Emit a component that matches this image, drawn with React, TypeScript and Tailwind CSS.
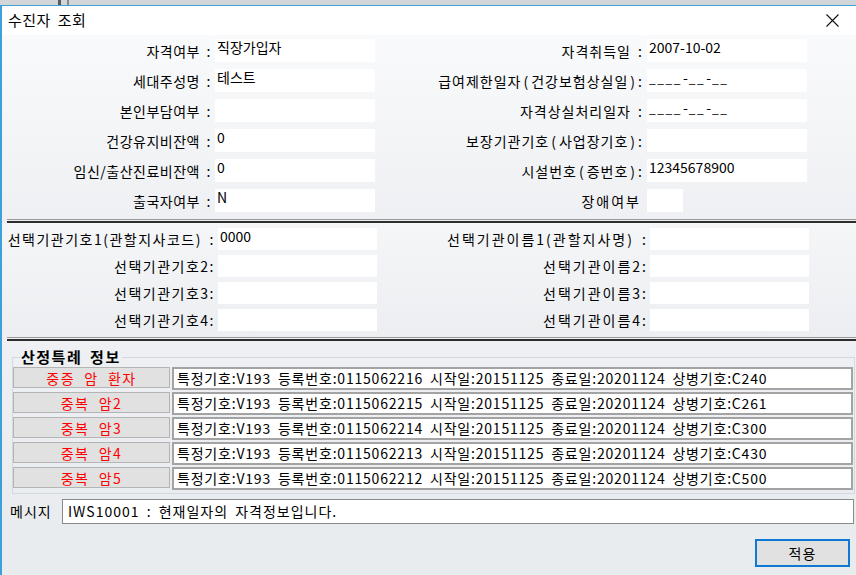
import React from 'react';

const topRows: { l: string; v: string; r: string; rv: string; small?: boolean }[] = [
  { l: '자격여부 :', v: '직장가입자', r: '자격취득일 :', rv: '2007-10-02' },
  { l: '세대주성명 :', v: '테스트', r: '급여제한일자(건강보험상실일) :', rv: '____-__-__' },
  { l: '본인부담여부 :', v: '', r: '자격상실처리일자 :', rv: '____-__-__' },
  { l: '건강유지비잔액 :', v: '0', r: '보장기관기호(사업장기호) :', rv: '' },
  { l: '임신/출산진료비잔액 :', v: '0', r: '시설번호(증번호) :', rv: '12345678900' },
  { l: '출국자여부 :', v: 'N', r: '장애여부', rv: '', small: true },
];

const specials = [
  { name: '중증  암  환자', no: '0115062216', code: 'C240' },
  { name: '중복  암2', no: '0115062215', code: 'C261' },
  { name: '중복  암3', no: '0115062214', code: 'C300' },
  { name: '중복  암4', no: '0115062213', code: 'C430' },
  { name: '중복  암5', no: '0115062212', code: 'C500' },
];

// wide parentheses, like the old Gulim face
function Wide({ text }: { text: string }) {
  const parts = text.split(/([()])/);
  return (
    <>
      {parts.map((p, i) =>
        p === '(' || p === ')' ? (
          <span key={i} className="px-[2px]">{p}</span>
        ) : (
          <React.Fragment key={i}>{p}</React.Fragment>
        )
      )}
    </>
  );
}

// masked date: short separated underscores
function Masked({ text }: { text: string }) {
  return (
    <>
      {text.split('').map((c, i) =>
        c === '_' ? (
          <span key={i} className="text-[12px] tracking-[1.5px]">_</span>
        ) : (
          <span key={i} className="px-[1px]">{c}</span>
        )
      )}
    </>
  );
}

function Separator() {
  return <div className="ml-[5px] h-[4px] border-t border-[#9a9a9a] border-b-2 border-b-[#2e2e2e]" />;
}

function Value({ text, w = 'w-[160px]', h = 'h-[23px]' }: { text: string; w?: string; h?: string }) {
  return (
    <div className={`${w} ${h} bg-white pl-[2px] text-[14px] leading-[16px] whitespace-pre`}>
      {text.includes('_') ? <Masked text={text} /> : text}
    </div>
  );
}

export default function App() {
  return (
    <div className="w-[856px] h-[575px] bg-[#d3d6d9] flex flex-col overflow-hidden text-black [font-family:'Noto_Sans_CJK_KR','Noto_Sans',sans-serif] [word-spacing:3px]">
      <div className="h-[5px] flex">
        <div className="w-[58px]" />
        <div className="w-[3px] bg-[#5a5a5a]" />
        <div className="w-[6px]" />
        <div className="w-[2px] bg-[#8a8a8a]" />
      </div>
      <div className="flex-1 flex flex-col border-l-2 border-t border-[#3f9fd8] bg-[#eceef1]">
        {/* title bar */}
        <div className="h-[29px] bg-white flex items-center justify-between pl-[6px] pr-[17px]">
          <span className="text-[15px] tracking-[0.5px]">수진자 조회</span>
          <svg width="13" height="13" viewBox="0 0 13 13">
            <path d="M0.5 0.5 L12.5 12.5 M12.5 0.5 L0.5 12.5" stroke="#111" strokeWidth="1.1" />
          </svg>
        </div>

        {/* 자격 정보 */}
        <div className="bg-gradient-to-b from-[#f9fafb] to-[#eef0f3] pt-[4px]">
          <div className="grid grid-cols-[213px_160px_272px_160px] text-[14px]">
            {topRows.map((row, i) => (
              <React.Fragment key={i}>
                <div className="h-[30px] flex items-start justify-end pr-[4px] pt-[3px] leading-[18px] tracking-[0.5px] whitespace-nowrap">{row.l}</div>
                <div className="h-[30px]"><Value text={row.v} /></div>
                <div className={`h-[30px] flex items-start justify-end pt-[3px] leading-[18px] tracking-[1px] whitespace-nowrap ${row.small ? 'pr-[6px] tracking-[2px]' : 'pr-[4px]'}`}>
                  <Wide text={row.r} />
                </div>
                <div className="h-[30px]">{row.small ? <Value text="" w="w-[36px]" /> : <Value text={row.rv} />}</div>
              </React.Fragment>
            ))}
          </div>
        </div>
        <Separator />

        {/* 선택기관 */}
        <div className="bg-gradient-to-b from-[#f5f6f8] to-[#eceef1] pt-[5px] pb-[1px]">
          <div className="grid grid-cols-[216px_159px_273px_159px] text-[14px]">
            {[1, 2, 3, 4].map(n => (
              <React.Fragment key={n}>
                <div className="h-[27px] flex items-start justify-end pr-[3px] pt-[2px] leading-[18px] whitespace-nowrap tracking-[1.5px]">
                  {n === 1 ? '선택기관기호1(관할지사코드) :' : `선택기관기호${n}:`}
                </div>
                <div className="h-[27px]"><Value text={n === 1 ? '0000' : ''} w="w-[159px]" h="h-[22px]" /></div>
                <div className="h-[27px] flex items-start justify-end pr-[2px] pt-[2px] leading-[18px] whitespace-nowrap tracking-[2px]">
                  {n === 1 ? '선택기관이름1(관할지사명) :' : `선택기관이름${n}:`}
                </div>
                <div className="h-[27px]"><Value text="" w="w-[159px]" h="h-[22px]" /></div>
              </React.Fragment>
            ))}
          </div>
        </div>
        <Separator />

        {/* 산정특례 정보 */}
        <div className="bg-gradient-to-b from-[#eef0f3] to-[#e8ebee] flex-1 flex flex-col">
          <fieldset className="mt-[8px] ml-[10px] mr-[1px] border border-[#d3d9df] pr-[1px] pb-[1px]">
            <legend className="ml-[7px] px-[1px] text-[15px] leading-[16px] font-bold tracking-[1.5px]">산정특례 정보</legend>
            <div className="mt-[2px] flex flex-col">
              {specials.map(s => (
                <div key={s.no} className="h-[25px] flex items-start gap-[2px]">
                  <button className="w-[157px] h-[21px] bg-[#e1e1e1] border border-[#b4b4b4] text-[#ff0000] text-[14px] leading-[18px] whitespace-pre tracking-[1.5px]">
                    {s.name}
                  </button>
                  <div className="flex-1 h-[23px] bg-white border-2 border-[#a3a3a3] pl-[3px] text-[14px] leading-[18px] whitespace-nowrap tracking-[0.8px]">
                    특정기호:V193 등록번호:{s.no} 시작일:20151125 종료일:20201124 상병기호:{s.code}
                  </div>
                </div>
              ))}
            </div>
          </fieldset>

          <div className="mt-[5px] flex items-center pl-[8px] pr-[2px]">
            <span className="w-[52px] text-[14px] tracking-[1px]">메시지</span>
            <div className="flex-1 h-[25px] bg-white border border-[#8a8a8a] pl-[5px] text-[14px] leading-[22px] whitespace-pre tracking-[1px]">
              IWS10001 : 현재일자의 자격정보입니다.
            </div>
          </div>

          <div className="flex-1 flex justify-end items-start pt-[15px] pr-[6px] bg-[#e9ecef]">
            <button className="w-[95px] h-[28px] bg-[#e1e1e1] border-2 border-[#0f78d4] text-[14px] tracking-[1px]">적용</button>
          </div>
        </div>
      </div>
    </div>
  );
}
